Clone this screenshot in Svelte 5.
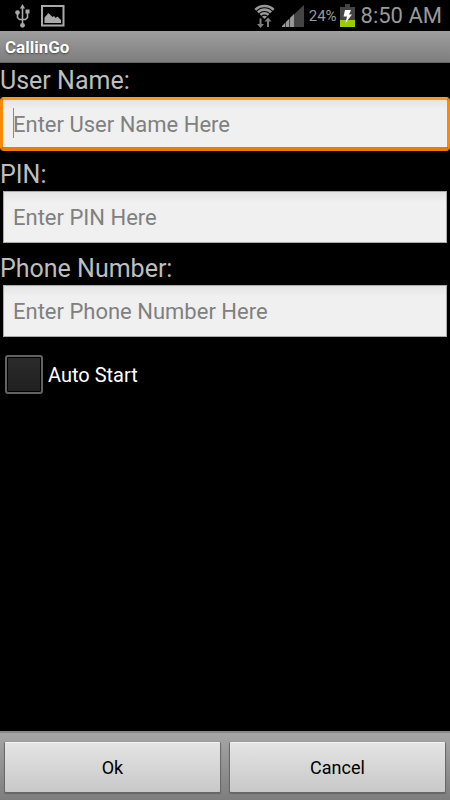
<script lang="ts">
	const fields = [
		{ id: 'user', label: 'User Name:', hint: 'Enter User Name Here' },
		{ id: 'pin', label: 'PIN:', hint: 'Enter PIN Here' },
		{ id: 'phone', label: 'Phone Number:', hint: 'Enter Phone Number Here' }
	];

	let values = $state<Record<string, string>>({ user: '', pin: '', phone: '' });
	let active = $state('user');
	let autoStart = $state(false);

	function cancel() {
		values = { user: '', pin: '', phone: '' };
		autoStart = false;
		active = 'user';
	}
</script>

<div class="screen">
	<header class="status">
		<div class="notices">
			<svg width="16" height="24" viewBox="0 0 16 24" role="img" aria-label="USB">
				<g fill="none" stroke="#aaa" stroke-width="1.6">
					<path d="M7.5 3v18" />
					<path d="M2.5 8v5.500l2 2h6l2-2V7" />
				</g>
				<path d="M7.5 0L10 4.500H5z" fill="#aaa" />
				<circle cx="2.5" cy="8.500" r="2.300" fill="#aaa" />
				<rect x="10.5" y="5.500" width="4" height="4" fill="#aaa" />
				<circle cx="7.5" cy="21.300" r="2.400" fill="#aaa" />
			</svg>
			<svg width="24" height="22" viewBox="0 0 24 22" role="img" aria-label="Screenshot">
				<rect x="1" y="1" width="21.5" height="19.5" fill="none" stroke="#aaa" stroke-width="2" />
				<path d="M3.5 18v-5.5L7.5 8l4 4 1.5-1 1.5 2 2-1.5L20 15v3z" fill="#aaa" />
			</svg>
		</div>
		<div class="system">
			<svg class="wifi" width="21" height="24" viewBox="0 0 21 24" role="img" aria-label="Wi-Fi">
				<clipPath id="fan"><path d="M10.500 15L-1 3.500V0h23v3.500z" /></clipPath>
				<g clip-path="url(#fan)" fill="none" stroke="#999" stroke-width="2.600">
					<circle cx="10.5" cy="15" r="13" />
					<circle cx="10.5" cy="15" r="9.400" />
					<circle cx="10.5" cy="15" r="5.800" />
					<circle cx="10.5" cy="15" r="1.600" stroke-width="3.200" />
				</g>
				<path d="M5.500 14.500h2V20h2.500L6.500 24 3 20h2.500zM13 23h2v-5.500h2.500L14 13.500 10.500 17.500H13z" fill="#808080" />
			</svg>
			<svg class="signal" width="22" height="22" viewBox="0 0 22 22" role="img" aria-label="Signal">
				<path d="M3 19v-1L22 0v22H3z" fill="#444" />
				<path d="M0 22v-1l3-3v4z" fill="#999" />
				<path d="M4 22v-5l3-3v8z" fill="#999" />
				<path d="M8 22v-9l4-4v13z" fill="#999" />
			</svg>
			<span class="percent">24%</span>
			<svg class="battery" width="15" height="23" viewBox="0 0 15 23" role="img" aria-label="Charging">
				<path d="M5 0h5v3h5v20H0V3h5z" fill="#444" />
				<rect y="16" width="15" height="7" fill="#9c0" />
				<path d="M5 6h6l-2 4.5h3L5.500 19l1.500-6.500H3.500z" fill="#fff" />
			</svg>
			<time>8:50 AM</time>
		</div>
	</header>

	<h1>CallinGo</h1>

	<main>
		{#each fields as f (f.id)}
			<div class="field" class:active={active === f.id}>
				<label for={f.id}>{f.label}</label>
				<div class="box">
					<input
						id={f.id}
						type={f.id === 'pin' ? 'password' : 'text'}
						placeholder={f.hint}
						bind:value={values[f.id]}
						onfocus={() => (active = f.id)}
					/>
					{#if active === f.id && !values[f.id]}<span class="caret"></span>{/if}
				</div>
			</div>
		{/each}

		<label class="check">
			<input type="checkbox" bind:checked={autoStart} />
			<span>Auto Start</span>
		</label>
	</main>

	<footer>
		<button type="button">Ok</button>
		<button type="button" onclick={cancel}>Cancel</button>
	</footer>
</div>

<style>
	:global(body) { margin: 0; background: #000; }

	.screen {
		min-height: 100vh;
		display: flex;
		flex-direction: column;
		background: #000;
		font-family: Roboto, sans-serif;
	}

	.status {
		display: flex;
		justify-content: space-between;
		height: 31px;
		padding: 0 8px 0 15px;
		color: #999;
	}
	.notices, .system { display: flex; align-items: center; }
	.notices { gap: 10px; }
	.wifi, .battery { margin-right: 6px; }
	.signal { margin: 0 5px 0 1px; }
	.percent { font-size: 15px; margin-right: 3px; }
	time { font-size: 22px; }

	h1 {
		margin: 0;
		padding: 0 5px;
		box-sizing: border-box;
		height: 32px;
		line-height: 32px;
		font-size: 17px;
		font-weight: 700;
		color: #fff;
		text-shadow: 0 1px 2px #444;
		background: linear-gradient(#9e9e9e, #7e7e7e);
		border-bottom: 1px solid #666;
	}

	main { flex: 1; }

	.field { height: 94px; }
	.field label {
		display: block;
		box-sizing: border-box;
		height: 34px;
		padding-top: 2px;
		line-height: 32px;
		font-size: 25px;
		color: #bebebe;
	}
	.box { position: relative; margin: 0 3px; }
	.active .box { margin: 0; }
	.field input {
		display: block;
		width: 100%;
		height: 52px;
		box-sizing: border-box;
		padding: 1px 9px 0;
		border: 1px solid #aaa;
		border-radius: 0;
		outline: none;
		font: 22px Roboto, sans-serif;
		color: #000;
		caret-color: transparent;
		background: linear-gradient(#e4e4e4, #f0f0f0 10px);
	}
	.field input:not(:placeholder-shown) { caret-color: #555; }
	.field input::placeholder { color: #808080; opacity: 1; }
	.active input {
		height: 54px;
		padding: 2px 10px 0;
		border: 3px solid #f80;
		border-color: #ff9a16 #f88a08 #ee7a00;
		border-bottom-width: 4px;
		border-radius: 4px;
	}
	.caret {
		position: absolute;
		left: 13px;
		top: 11px;
		width: 1px;
		height: 30px;
		background: #888;
	}

	.check {
		display: inline-flex;
		align-items: center;
		gap: 5px;
		margin: 10px 5px;
		font-size: 20px;
		color: #fff;
	}
	.check input {
		appearance: none;
		width: 38px;
		height: 39px;
		margin: 0;
		border: 2px solid #626262;
		border-radius: 3px;
		background: linear-gradient(#2b2b2b, #202020);
		box-shadow: inset 0 0 0 1px #000;
	}
	.check input:checked { background: #7b0; }

	footer {
		display: flex;
		gap: 10px;
		padding: 9px 5px 8px;
		border-top: 2px solid #888;
		background: linear-gradient(#a6a6a6, #7e7e7e);
	}
	button {
		flex: 1;
		height: 50px;
		border: 0;
		border-top: 1px solid #f4f4f4;
		border-radius: 1px;
		font: 18px Roboto, sans-serif;
		color: #000;
		background: linear-gradient(#e4e4e4, #c8c8c8);
		box-shadow: 0 1px 1px 1px #666;
	}
	button:active { background: #f90; }
</style>
